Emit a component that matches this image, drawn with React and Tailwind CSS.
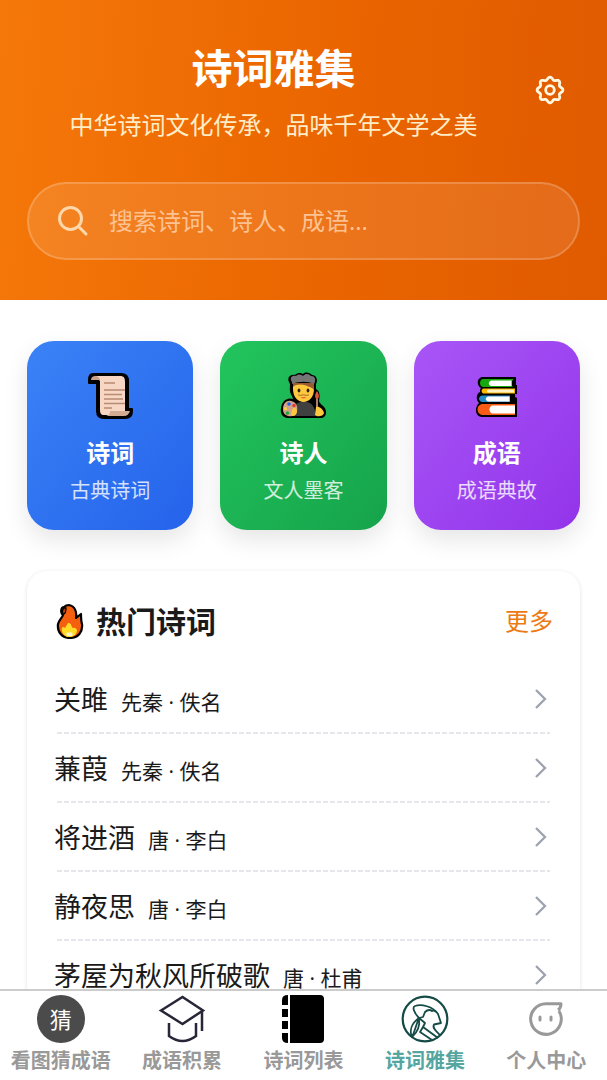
import React from 'react';

const Gear = () => {
    const points = [];
    for (let i = 0; i <= 96; i++) {
        const a = (i / 96) * Math.PI * 2;
        const r = 11.6 + 1.3 * Math.cos(a * 8);
        points.push(`${(15 + r * Math.sin(a)).toFixed(2)} ${(15 - r * Math.cos(a)).toFixed(2)}`);
    }
    return (
        <svg className="size-[30px]" viewBox="0 0 30 30" fill="none" stroke="currentColor" strokeWidth="2.8" strokeLinejoin="round">
            <path d={`M${points.join('L')}Z`} />
            <circle cx="15" cy="15" r="4.3" />
        </svg>
    );
};

const SearchIcon = () => (
    <svg className="size-[32px] shrink-0" viewBox="0 0 32 32" fill="none" stroke="currentColor" strokeWidth="3" strokeLinecap="round" aria-hidden="true">
        <circle cx="13.5" cy="13.5" r="11" />
        <path d="M21.5 21.5L29 29" />
    </svg>
);

const Scroll = () => (
    <svg className="size-[50px]" viewBox="0 0 50 50" aria-hidden="true">
        <path d="M8 3H36C41 3 43 6 43 10V38H47V40C47 45 44 47 40 47H19C14 47 12 44 12 40V12H4V9C4 5 5 3 8 3Z" fill="#000" stroke="#000" strokeWidth="2" strokeLinejoin="round" />
        <path d="M10 5H35C39 5 40 7 40 11V44H19C16 44 15 42 15 39V10Z" fill="#f7d7c4" />
        <path d="M6 9C6 6 8 5 10 5C13 5 15 7 15 9Z" fill="#c9a18b" />
        <path d="M25 40H45C44 43 42 45 39 45H21C24 44 25 43 25 40Z" fill="#d3aa92" />
        <path d="M19 12H30M19 19H40M19 23.5H37M19 28H38M19 32.5H40M19 37H27" stroke="#b98b72" strokeWidth="1.3" />
    </svg>
);

const Artist = () => (
    <svg className="size-[50px]" viewBox="0 0 50 50" aria-hidden="true">
        <path d="M14 25C11 21 12 16 12 13C8 7 12 3 17 4C20 1 23 2 25 3C28 0 32 2 34 4C39 4 40 10 38 13V18C42 20 42 25 41 30C42 34 48 35 48 41C48 45 46 47 42 47H9C4 46 2 42 3 37C4 30 9 26 15 28Z" fill="#000" />
        <path d="M14 45C15 35 18 31 24 31C32 30 37 34 38 45Z" fill="#404040" />
        <path d="M15 12H36V18C36 26 31 31 25.5 31C20 31 15 26 15 18Z" fill="#ffc83d" />
        <path d="M15 12H36V19C34 16 31 16 28 14.5C23 13 18 13 15 16Z" fill="#9a5a32" />
        <path d="M14 11C11 7 14 4 18 5C21 2 24 4 25 5C28 2 31 3 33 5C38 5 38 10 36 13C30 10 21 10 14 13Z" fill="#757575" />
        <ellipse cx="21" cy="19.5" rx="1.4" ry="2.1" fill="#302016" />
        <ellipse cx="30" cy="19.5" rx="1.4" ry="2.1" fill="#302016" />
        <path d="M20 23.8Q22 25 25.5 23.8Q29 25 31 23.8" fill="none" stroke="#9b6132" strokeWidth="0.9" />
        <path d="M22.5 26Q25.5 29 28.5 26Z" fill="#f06a3c" />
        <path d="M5 38C5 32 9 29 13 30C18 31 20 35 19 40C18 44 14 46 10 45C7 44 5 42 5 38Z" fill="#d1a28c" />
        <circle cx="11" cy="33" r="1.8" fill="#2563eb" />
        <circle cx="16" cy="34.5" r="1.7" fill="#e5392c" />
        <circle cx="7.5" cy="37.5" r="1.5" fill="#ffd52e" />
        <circle cx="9.5" cy="42" r="1.7" fill="#18a934" />
        <path d="M14 39C16 35 19 37 19 41C18 45 15 46 13 44Z" fill="#ffc83d" />
        <path d="M39 27V39" stroke="#bd8d7b" strokeWidth="1.8" />
        <path d="M39 20C42 24 41 28 39 28C37 28 36 24 39 20Z" fill="#d95438" />
        <path d="M38 36C41 35 45 38 46 42C45 46 39 46 37 44Z" fill="#ffc83d" />
    </svg>
);

const Books = () => (
    <svg className="size-[50px]" viewBox="0 0 50 50" aria-hidden="true">
        <path d="M10 6H44V14H45V23H43V26L45 27V46H11C3 46 2 37 7 32C3 28 5 22 8 21C8 19 8 18 9 17C4 14 5 7 10 6Z" fill="#000" />
        <path d="M11 8H41V9L40 10V15L41 16H11C7 15 7 9 11 8Z" fill="#16a80d" />
        <path d="M19 9.5H39.5V15H19C16 14 16 11 19 9.5Z" fill="#fff" />
        <path d="M11 17.5H43V22.5H11C9 21 9 19 11 17.5Z" fill="#ffb900" />
        <path d="M16 18.5H42V21.5H16C14.5 20.5 14.5 19.5 16 18.5Z" fill="#fff3c4" />
        <path d="M10 24.5H38V31H10C6 30 6 25.5 10 24.5Z" fill="#2889c8" />
        <path d="M16 25.5H37.5V30.5H16C13 29 13 27 16 25.5Z" fill="#fff" />
        <path d="M10 33H43V44H10C4 43 4 34 10 33Z" fill="#f75b16" />
        <path d="M20 34.5H43V42.5H20C16.5 40.5 16.5 36.5 20 34.5Z" fill="#fff" />
    </svg>
);

const Fire = () => (
    <svg className="h-[36px] w-[32px]" viewBox="0 0 32 36" aria-hidden="true">
        <path d="M15 2C21 3 23 9 22 15L27 11C27 15 27 18 28 21C29 29 24 35 16 35C8 35 3 29 4 21C5 17 8 15 9 12C6 10 7 4 10 4C12 2 13 2 15 2Z" fill="#f5600f" stroke="#000" strokeWidth="2.2" strokeLinejoin="round" />
        <path d="M10 5C7 8 9 12 10 11C12 10 12 7 12 5Z" fill="#b8420d" stroke="#000" strokeWidth="1.3" />
        <path d="M8 28C7 24 9 23 11 25C13 22 13 20 15 20C18 21 17 24 19 25C21 24 23 26 23 28C22 32 19 34 15 34C12 34 9 32 8 28Z" fill="#ffdc27" />
        <path d="M13 33C11 30 14 28 15 30C17 28 20 31 18 33Z" fill="#fff6c8" />
    </svg>
);

const GuessIcon = () => (
    <span className="flex size-12 items-center justify-center rounded-full bg-[#4b4b4b] text-[22px] font-normal text-white">猜</span>
);

const CapIcon = () => (
    <svg className="size-12" viewBox="0 0 48 48" fill="none" stroke="#292637" strokeWidth="2.5" aria-hidden="true">
        <path d="M3 15.5L24.5 2L45 15.5L24.5 29Z" />
        <path d="M11 28V41Q24.5 51 38 41V28M44 16V36" />
    </svg>
);

const BookIcon = () => (
    <svg className="size-12" viewBox="0 0 48 48" aria-hidden="true">
        <path d="M11 0H41Q45 0 45 4V44Q45 48 41 48H11Z" />
        <path d="M9 0V10H3V5Q3 0 9 0ZM3 14H9V22H3ZM3 26H9V34H3ZM3 38H9V48Q3 48 3 43Z" />
    </svg>
);

const PoetIcon = () => (
    <svg className="size-12" viewBox="0 0 48 48" fill="none" stroke="#154b47" strokeWidth="1.8" strokeLinejoin="round" aria-hidden="true">
        <circle cx="24" cy="24" r="22.3" strokeWidth="2.2" />
        <path d="M18 23C13 18 11 12 14 11C20 9 32 11 37 19L40 28L33 29.5C31 33 35 36 39 40" />
        <path d="M18 23L22 22L24 17C27 14 30 15 31 16C33 15 34 16 35 17" />
        <path d="M18 23C11 28 8 35 11 42C17 37 19 30 18 23C15 30 14 36 11 42" />
        <path d="M18 23L24 28L22 32L37 43M22 32L19 37L31 45" />
    </svg>
);

const ProfileIcon = () => (
    <svg className="size-12" viewBox="0 0 48 48" fill="none" stroke="#999" strokeWidth="3" strokeLinejoin="round" aria-hidden="true">
        <path d="M37 16A15.3 15.3 0 1 1 24 8.7H39Q39 13 36 15" />
        <path d="M18 22V25M29 22V25" strokeLinecap="round" />
    </svg>
);

const categories = [
    { title: '诗词', desc: '古典诗词', icon: Scroll, color: 'from-[#3b82f6] to-[#2563eb]' },
    { title: '诗人', desc: '文人墨客', icon: Artist, color: 'from-[#22c55e] to-[#16a34a]' },
    { title: '成语', desc: '成语典故', icon: Books, color: 'from-[#a855f7] to-[#9333ea]' },
];

const poems = [
    { title: '关雎', author: '先秦 · 佚名' },
    { title: '蒹葭', author: '先秦 · 佚名' },
    { title: '将进酒', author: '唐 · 李白' },
    { title: '静夜思', author: '唐 · 李白' },
    { title: '茅屋为秋风所破歌', author: '唐 · 杜甫' },
];

const tabs = [
    { label: '看图猜成语', icon: GuessIcon },
    { label: '成语积累', icon: CapIcon },
    { label: '诗词列表', icon: BookIcon },
    { label: '诗词雅集', icon: PoetIcon, active: true },
    { label: '个人中心', icon: ProfileIcon },
];

const Header = () => {
    return (
        <header className="bg-linear-[94deg,#f5780a,#ea6500_55%,#e05a00] px-[27px] pt-[41px] pb-10 text-white">
            <div className="flex items-center">
                <div className="min-w-0 flex-1 text-center">
                    <h1 className="text-[41px] leading-[54px] font-bold">诗词雅集</h1>
                    <p className="mt-4 text-2xl leading-7 text-[#ffedc8]">中华诗词文化传承，品味千年文学之美</p>
                </div>
                <button type="button" aria-label="设置" className="flex size-[60px] items-center justify-center text-[#fff7e0]">
                    <Gear />
                </button>
            </div>
            <label className="mt-[43px] flex h-[78px] items-center gap-5 rounded-full border-2 border-white/20 bg-white/10 px-7 text-[#fed7aa]">
                <SearchIcon />
                <input type="text" aria-label="搜索" placeholder="搜索诗词、诗人、成语..." className="min-w-0 flex-1 bg-transparent text-2xl text-white outline-none placeholder:text-[#fdc292]" />
            </label>
        </header>
    );
};

const Categories = () => {
    return (
        <section className="grid grid-cols-3 gap-[27px]">
            {categories.map(({ title, desc, icon: Icon, color }) => (
                <button key={title} type="button" className={`flex flex-col items-center rounded-[27px] bg-linear-to-br pt-[30px] pb-[25px] text-white shadow-[0_10px_24px_rgba(0,0,0,0.1)] ${color}`}>
                    <Icon />
                    <span className="mt-4 text-2xl leading-8 font-bold">{title}</span>
                    <span className="mt-2 text-xl leading-7 text-white/80">{desc}</span>
                </button>
            ))}
        </section>
    );
};

const PoemList = () => {
    return (
        <section className="mt-[41px] rounded-[20px] bg-white px-[27px] pt-[26px] shadow-[0_1px_4px_rgba(0,0,0,0.12)]">
            <div className="flex h-12 items-center justify-between">
                <h2 className="flex items-center gap-[10px] text-[30px] font-bold">
                    <Fire />
                    热门诗词
                </h2>
                <a href="#more" className="text-2xl text-[#ed7a14]">更多</a>
            </div>
            <ul className="mt-5">
                {poems.map((poem) => (
                    <li key={poem.title}>
                        <a href="#poem" className="flex h-[67px] items-center justify-between">
                            <span className="flex items-baseline gap-[13px] pt-[3px]">
                                <span className="text-[27px]">{poem.title}</span>
                                <span className="text-[21px]">{poem.author}</span>
                            </span>
                            <svg className="h-5 w-[26px] text-[#9ca3af]" viewBox="0 0 26 20" fill="none" stroke="currentColor" strokeWidth="2.3" aria-hidden="true">
                                <path d="M9 1L18 10L9 19" />
                            </svg>
                        </a>
                        <div className="mx-[3px] h-[2px] bg-[repeating-linear-gradient(90deg,#e5e7eb_0_5px,transparent_5px_7px)]" />
                    </li>
                ))}
            </ul>
        </section>
    );
};

const TabBar = () => {
    return (
        <nav className="grid shrink-0 grid-cols-5 border-t-2 border-[#ccc] bg-white pt-1 pb-px">
            {tabs.map(({ label, icon: Icon, active }) => (
                <a key={label} href="#tab" className={`flex flex-col items-center text-xl leading-9 font-bold whitespace-nowrap ${active ? 'text-[#55a5a0]' : 'text-[#999]'}`}>
                    <Icon />
                    {label}
                </a>
            ))}
        </nav>
    );
};

const App = () => {
    return (
        <div className="flex h-screen flex-col bg-white font-['Open_Sans','Noto_Sans_CJK_SC',sans-serif] text-[#1a1a1a]">
            <main className="min-h-0 flex-1 overflow-y-auto [scrollbar-width:none]">
                <Header />
                <div className="px-[27px] pt-[41px] pb-10">
                    <Categories />
                    <PoemList />
                </div>
            </main>
            <TabBar />
        </div>
    );
};

export default App;
